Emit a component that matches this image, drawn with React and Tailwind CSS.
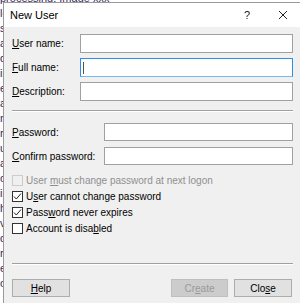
import React from "react";

const F = { fontFamily: '"Liberation Sans Narrow", "Liberation Sans", Arial, sans-serif' };

function Mn({ pre = "", u, post = "" }) {
  return (
    <>
      {pre}
      <span className="underline underline-offset-[1px] decoration-[1px]">{u}</span>
      {post}
    </>
  );
}

function Check({ checked, disabled, children }) {
  return (
    <div className="flex items-center h-[16px] gap-[3px]">
      <div
        className={
          "w-[11px] h-[11px] border flex items-center justify-center " +
          (disabled ? "border-[#cccccc] bg-[#f0f0f0]" : "border-[#333333] bg-white")
        }
      >
        {checked && (
          <svg width="9" height="9" viewBox="0 0 9 9">
            <polyline points="1,4.5 3.3,7 8,1.5" fill="none" stroke="#222" strokeWidth="1" />
          </svg>
        )}
      </div>
      <span className={disabled ? "text-[#8f8f8f]" : "text-black"}>{children}</span>
    </div>
  );
}

export default function App() {
  const bgLines = [
    "processing. Image xxx",
    "lorem ipsum dolor",
    "sit amet consect",
    "adipiscing elit sed",
    "do eiusmod tempor",
    "incididunt ut labore",
    "et dolore magna",
    "aliqua ut enim ad",
    "minim veniam quis",
    "nostrud exercitation",
    "ullamco laboris nisi",
    "aliquip ex ea commodo",
    "consequat duis aute",
    "irure dolor in repre",
    "henderit in volupt",
    "velit esse cillum",
    "dolore eu fugiat",
    "nulla pariatur exc",
    "eptur sint occaecat",
    "cupidatat non proid",
  ];
  return (
    <div className="relative w-[300px] h-[303px] overflow-hidden bg-white" style={F}>
      <div className="flex flex-col -mt-[9px] text-[11px] leading-[15px] text-[#3a2a5a]">
        {bgLines.map((l, i) => (
          <div key={i} className="whitespace-nowrap">{l}</div>
        ))}
      </div>
      <div className="absolute left-[3px] top-[2px] w-[304px] h-[320px] border-l border-t border-[#9a9a9a] flex flex-col bg-[#f0f0f0] text-[10px] text-black">
        <div className="h-[24px] bg-white flex items-center shrink-0">
          <div className="flex-1 pl-[6px] text-[11px] text-black">New User</div>
          <div className="w-[24px] flex justify-center text-[11px] text-[#222]">?</div>
          <div className="w-[48px] flex justify-center">
            <svg width="10" height="10" viewBox="0 0 10 10">
              <path d="M1 1 L9 9 M9 1 L1 9" stroke="#222" strokeWidth="1" />
            </svg>
          </div>
        </div>
        <div className="flex flex-col pl-[8px] pt-[7px]">
          <div className="flex flex-col gap-[5px]">
            <div className="flex items-center h-[19px]">
              <div className="w-[68px]"><Mn u="U" post="ser name:" /></div>
              <div className="w-[213px] h-[19px] bg-white border border-[#a0a0a0]" />
            </div>
            <div className="flex items-center h-[19px]">
              <div className="w-[68px]"><Mn u="F" post="ull name:" /></div>
              <div className="w-[213px] h-[19px] bg-white border border-[#2f8fe6] border-b-[#7ab9ef] flex items-center pl-[2px]">
                <div className="w-[1px] h-[12px] bg-[#555]" />
              </div>
            </div>
            <div className="flex items-center h-[19px]">
              <div className="w-[68px]"><Mn u="D" post="escription:" /></div>
              <div className="w-[213px] h-[19px] bg-white border border-[#a0a0a0]" />
            </div>
          </div>
          <div className="mt-[9px] w-[281px] border-t border-[#a0a0a0] border-b border-b-white" />
          <div className="mt-[11px] flex flex-col gap-[6px]">
            <div className="flex items-center h-[18px]">
              <div className="w-[92px]"><Mn u="P" post="assword:" /></div>
              <div className="w-[189px] h-[18px] bg-white border border-[#a0a0a0]" />
            </div>
            <div className="flex items-center h-[18px]">
              <div className="w-[92px]"><Mn u="C" post="onfirm password:" /></div>
              <div className="w-[189px] h-[18px] bg-white border border-[#a0a0a0]" />
            </div>
          </div>
          <div className="mt-[7px] flex flex-col">
            <Check disabled>
              <Mn pre="User " u="m" post="ust change password at next logon" />
            </Check>
            <Check checked>
              <Mn pre="U" u="s" post="er cannot change password" />
            </Check>
            <Check checked>
              <Mn pre="Pass" u="w" post="ord never expires" />
            </Check>
            <Check>
              <Mn pre="Account is disa" u="b" post="led" />
            </Check>
          </div>
          <div className="mt-[27px] w-[281px] border-t border-[#a0a0a0] border-b border-b-white" />
          <div className="mt-[14px] w-[280px] flex justify-between">
            <div className="w-[58px] h-[18px] bg-[#e1e1e1] border border-[#adadad] flex items-center justify-center">
              <Mn u="H" post="elp" />
            </div>
            <div className="flex gap-[6px]">
              <div className="w-[57px] h-[18px] bg-[#cccccc] border border-[#bfbfbf] flex items-center justify-center text-[#9a9a9a]">
                <Mn pre="Cr" u="e" post="ate" />
              </div>
              <div className="w-[58px] h-[18px] bg-[#e1e1e1] border border-[#adadad] flex items-center justify-center">
                <Mn pre="Clo" u="s" post="e" />
              </div>
            </div>
          </div>
        </div>
      </div>
    </div>
  );
}
